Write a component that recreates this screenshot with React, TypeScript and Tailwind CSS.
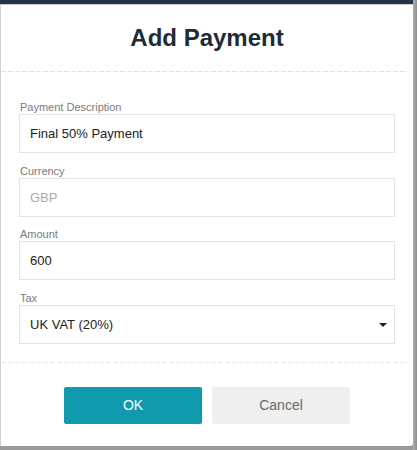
export default function App() {
  const labelCls = "h-[14px] leading-[14px] text-[11px] text-[#7b7b7b] pl-[1px]";
  const inputCls =
    "h-[39px] border border-[#e4e4e4] bg-white flex items-center pl-[10px] text-[13px]";
  return (
    <div className="w-[417px] h-[450px] flex bg-[#9b9b9b] font-['Liberation_Sans',Arial,sans-serif]">
      <div className="w-[413px] h-[446px] flex flex-col">
        <div className="h-[4px] bg-[#243444]" />
        <div className="h-[1px] bg-[#c9cdd2]" />
        <div className="flex-1 bg-white border-l border-[#d2d2d2] rounded-br-[3px] flex flex-col">
          <div className="pt-[19px] pb-[19px] text-center text-[24px] leading-[28px] font-bold text-[#1e2b38]">
            Add Payment
          </div>
          <div className="h-[1px] mr-[5px] bg-[repeating-linear-gradient(to_right,#e4e4e4_0px,#e4e4e4_5px,transparent_5px,transparent_7px)]" />
          <div className="px-[18px] pt-[28px] pb-[18px] flex flex-col">
            <div className={labelCls}>Payment Description</div>
            <div className={inputCls + " text-[#222222]"}>Final 50% Payment</div>
            <div className={labelCls + " mt-[11px]"}>Currency</div>
            <div className={inputCls + " text-[#ababab]"}>GBP</div>
            <div className={labelCls + " mt-[10px]"}>Amount</div>
            <div className={inputCls + " text-[#222222]"}>600</div>
            <div className={labelCls + " mt-[11px]"}>Tax</div>
            <div className={inputCls + " text-[#222222] justify-between pr-[7px]"}>
              <span>UK VAT (20%)</span>
              <svg width="8" height="4" viewBox="0 0 8 4">
                <polygon points="0,0 8,0 4,4" fill="#222222" />
              </svg>
            </div>
          </div>
          <div className="h-[1px] mr-[5px] bg-[repeating-linear-gradient(to_right,#e8e8e8_0px,#e8e8e8_5px,transparent_5px,transparent_7px)]" />
          <div className="pt-[24px] flex justify-center gap-[10px]">
            <button className="w-[138px] h-[37px] rounded-[2px] bg-[#0f99ad] text-white text-[14px]">
              OK
            </button>
            <button className="w-[138px] h-[37px] rounded-[2px] bg-[#efefef] text-[#6a6a6a] text-[14px]">
              Cancel
            </button>
          </div>
        </div>
      </div>
      <div className="w-[4px] h-full bg-[linear-gradient(to_right,#b0b0b0,#8c8c8c)]" />
    </div>
  );
}
